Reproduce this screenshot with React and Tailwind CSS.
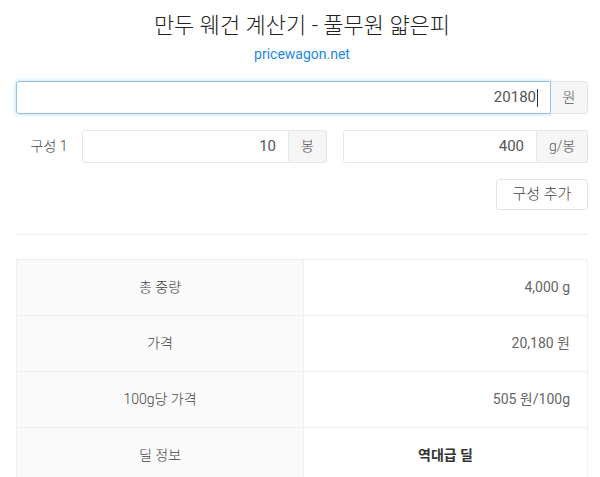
import React from "react";

const font = { fontFamily: 'Roboto, "Noto Sans CJK KR", "Noto Sans", sans-serif' };

function Group({ value, unit, unitW, focus, caret }) {
  return (
    <div className="flex flex-1 h-[33px]">
      <div
        className={
          "flex-1 flex items-center justify-end pr-[12px] text-[15px] text-[#555] rounded-l-[3px] border " +
          (focus
            ? "border-[#8ec5ea] shadow-[0_0_4px_rgba(102,175,233,0.5)]"
            : "border-[#e6e6e6]")
        }
      >
        <span>{value}</span>
        {caret && <span className="inline-block w-px h-[18px] bg-[#333] ml-px" />}
      </div>
      <div
        className={
          "flex items-center justify-center text-[14px] font-light text-[#555] bg-[#f6f6f6] border border-l-0 border-[#e6e6e6] rounded-r-[3px] " +
          unitW
        }
      >
        {unit}
      </div>
    </div>
  );
}

function Row({ label, value, bold }) {
  return (
    <div className="flex h-[56px] border-b border-[#f0f0f0]">
      <div className="w-[287px] flex items-center justify-center bg-[#fafafa] border-r border-[#f0f0f0] text-[14px] font-light text-[#444]">
        {label}
      </div>
      <div
        className={
          "flex-1 flex items-center text-[14px] " +
          (bold ? "justify-center font-bold text-[#333]" : "justify-end pr-[17px] text-[#666]")
        }
      >
        {value}
      </div>
    </div>
  );
}

export default function App() {
  return (
    <div className="w-[600px] h-[477px] overflow-hidden bg-white" style={font}>
      <div className="pl-[16px] pr-[12px]">
        <h1 className="text-center text-[22px] font-light text-[#222] pt-[12px] leading-[28px]">
          만두 웨건 계산기 - 풀무원 얇은피
        </h1>
        <div className="text-center text-[14px] text-[#1e88e5] mt-[4px] leading-[20px]">
          pricewagon.net
        </div>
        <div className="mt-[17px] flex">
          <Group value="20180" unit="원" unitW="w-[37px]" focus caret />
        </div>
        <div className="mt-[16px] flex items-center">
          <div className="w-[66px] text-center text-[14px] font-light text-[#444]">구성 1</div>
          <div className="flex-1 flex gap-[16px]">
            <Group value="10" unit="봉" unitW="w-[38px]" />
            <Group value="400" unit="g/봉" unitW="w-[51px]" />
          </div>
        </div>
        <div className="mt-[16px] flex justify-end">
          <div className="w-[92px] h-[31px] flex items-center justify-center border border-[#e3e3e3] rounded-[3px] text-[15px] font-light text-[#444]">
            구성 추가
          </div>
        </div>
        <div className="mt-[24px] border-t border-[#eeeeee]" />
        <div className="mt-[24px] border border-b-0 border-[#f0f0f0]">
          <Row label="총 중량" value="4,000 g" />
          <Row label="가격" value="20,180 원" />
          <Row label="100g당 가격" value="505 원/100g" />
          <Row label="딜 정보" value="역대급 딜" bold />
        </div>
      </div>
    </div>
  );
}
